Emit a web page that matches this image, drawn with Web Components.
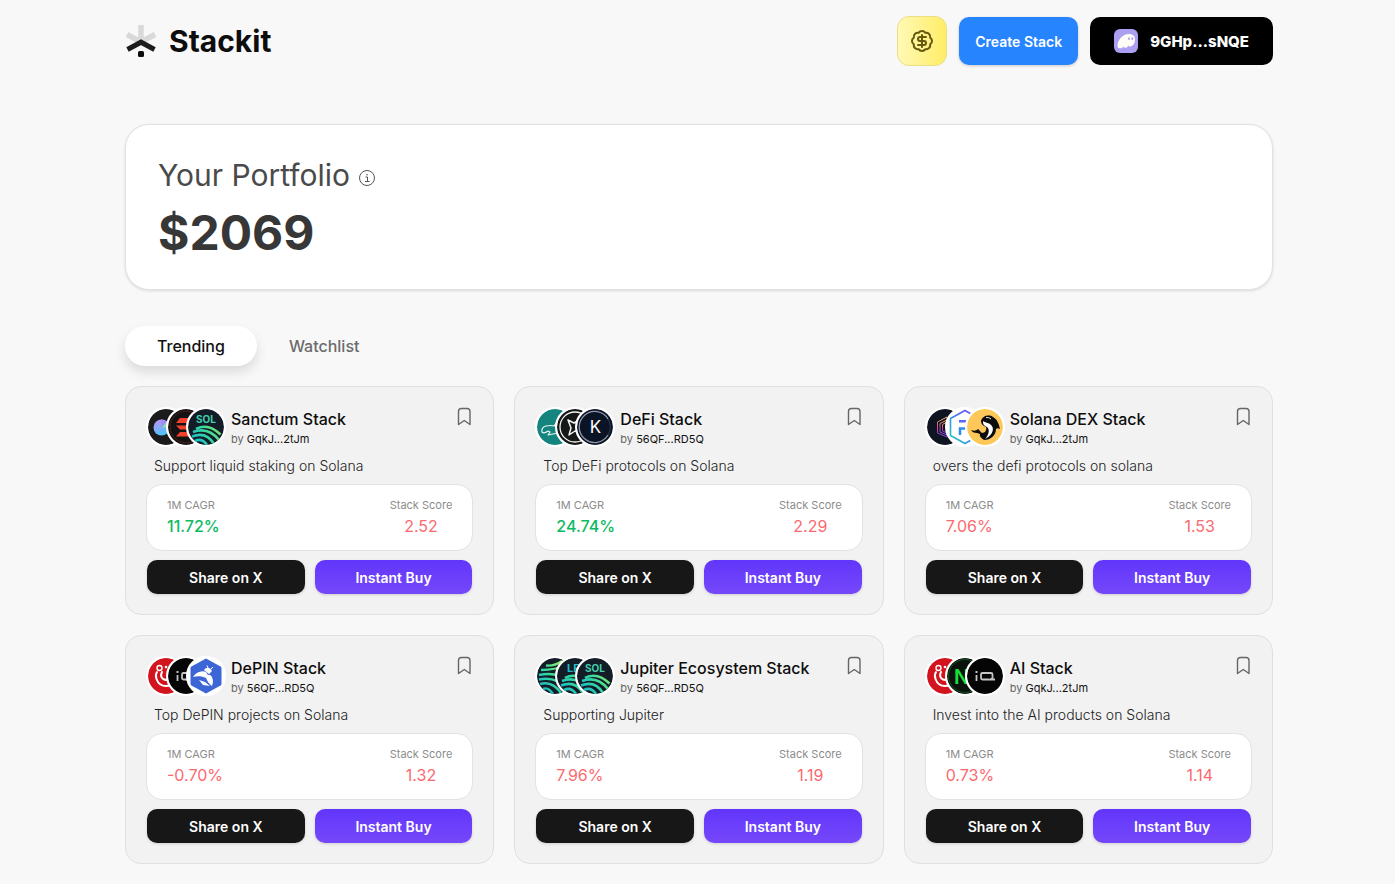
<!DOCTYPE html>
<html lang="en">
<head>
<meta charset="utf-8">
<meta name="viewport" content="width=device-width, initial-scale=1">
<title>Stackit</title>
<style>
  * {
    box-sizing: border-box;
  }

  body {
    margin: 0;
    padding: 16px 122px 18px 125px;
    background: #f8f8f8;
    color: #111;
    font-family: Inter, "Liberation Sans", sans-serif;
  }

  .stacks {
    display: grid;
    grid-template-columns: repeat(3, 1fr);
    gap: 20px;
  }

  @media (max-width: 1100px) {
    body {
      padding: 16px 24px;
    }

    .stacks {
      grid-template-columns: repeat(auto-fill, minmax(320px, 1fr));
    }
  }
</style>
</head>
<body>
  <stack-header wallet="9GHp...sNQE">Stackit</stack-header>

  <main>
    <portfolio-card amount="$2069">Your Portfolio</portfolio-card>

    <stack-tabs active="0">
      <span slot="first">Trending</span>
      <span slot="second">Watchlist</span>
    </stack-tabs>

    <div class="stacks">
      <stack-card name="Sanctum Stack" owner="GqkJ...2tJm" tokens="orb,sanctum,sol" cagr="11.72%" trend="up" score="2.52">Support liquid staking on Solana</stack-card>
      <stack-card name="DeFi Stack" owner="56QF...RD5Q" tokens="drift,spark,kamino" cagr="24.74%" trend="up" score="2.29">Top DeFi protocols on Solana</stack-card>
      <stack-card name="Solana DEX Stack" owner="GqkJ...2tJm" tokens="meteor,flux,orca" cagr="7.06%" trend="down" score="1.53">overs the defi protocols on solana</stack-card>
      <stack-card name="DePIN Stack" owner="56QF...RD5Q" tokens="render,ionet,hive" cagr="-0.70%" trend="down" score="1.32">Top DePIN projects on Solana</stack-card>
      <stack-card name="Jupiter Ecosystem Stack" owner="56QF...RD5Q" tokens="jup,lfg,sol" cagr="7.96%" trend="down" score="1.19">Supporting Jupiter</stack-card>
      <stack-card name="AI Stack" owner="GqkJ...2tJm" tokens="render,nos,ionet" cagr="0.73%" trend="down" score="1.14">Invest into the AI products on Solana</stack-card>
    </div>
  </main>

<script>
  const swoops = `
    <g fill="none" stroke="url(#g)" stroke-width="2.600">
      <path d="M8 20Q20 13.500 32.500 25.500"/>
      <path d="M5 23Q20 17.500 31 31"/>
      <path d="M4 27.500Q18 22 26 35"/>
      <path d="M7 32Q14 28.500 19 36"/>
    </g>`;

  const greenGradient = `
    <linearGradient id="g" x1="0" y1="36" x2="34" y2="8" gradientUnits="userSpaceOnUse">
      <stop offset="0.100" stop-color="#12b5d0"/>
      <stop offset="0.500" stop-color="#35d8a0"/>
      <stop offset="1" stop-color="#b5ee54"/>
    </linearGradient>`;

  // every token is drawn on a 36x36 board, the host clips it to a circle
  const tokens = {
    orb: `
      <defs><linearGradient id="g" x1="0" y1="0" x2="0.300" y2="1">
        <stop offset="0" stop-color="#c58cf5"/><stop offset="1" stop-color="#52c3fa"/>
      </linearGradient></defs>
      <rect width="36" height="36" fill="#1b1b1d"/>
      <circle cx="13.500" cy="18.500" r="8" fill="url(#g)"/>
      <path d="M13.500 18.500L19 12.500A8 8 0 0 1 21.500 18Z" fill="#8fe0a8"/>
      <path d="M13.500 18.500L13 10.500A8 8 0 0 1 19 12.500Z" fill="#a38cf8"/>`,
    sanctum: `
      <rect width="36" height="36" fill="#131313"/>
      <circle cx="18" cy="18" r="16" fill="none" stroke="#6e231a" stroke-width="0.700"/>
      <path d="M12 9H28L24 14H8Z M8 16.500H24L28 20.500H12Z M12 23H28L24 27.500H8Z" fill="#f2402c"/>`,
    sol: `
      <defs>${greenGradient}</defs>
      <rect width="36" height="36" fill="#131d28"/>
      <text x="18" y="14" text-anchor="middle" font-size="10" font-weight="700" fill="#43cfae">SOL</text>
      ${swoops}`,
    lfg: `
      <defs>${greenGradient}</defs>
      <rect width="36" height="36" fill="#131d28"/>
      <text x="10" y="14" font-size="11" font-weight="700" fill="#20bcc8">LF</text>
      ${swoops}`,
    jup: `
      <defs>${greenGradient}</defs>
      <rect width="36" height="36" fill="#131d28"/>
      <g fill="none" stroke="url(#g)" stroke-width="2.400">
        <path d="M9 7.500Q17 8.500 25 3"/>
        <path d="M4 12Q18 12 30 7"/>
        <path d="M2 17Q20 13 33 24"/>
        <path d="M2 21.500Q19 18 31 31"/>
        <path d="M3 26Q15 22.500 24 35"/>
        <path d="M6 31Q11 28.500 16 36"/>
      </g>`,
    drift: `
      <rect width="36" height="36" fill="#14857e"/>
      <path d="M22 11L17 17Q14 16 9 17Q4 18.500 5 23Q7 25 11 22L13 23L11 26L16 25L21 24" fill="none" stroke="#e6f5f2" stroke-width="1.200" stroke-linejoin="round"/>`,
    spark: `
      <rect width="36" height="36" fill="#151817"/>
      <circle cx="18" cy="18" r="15" fill="none" stroke="#f2f4f2" stroke-width="1.300"/>
      <path d="M11 11L17 14L22 11L21 17L24 24L18 22L12 26L14 19Z" fill="none" stroke="#f2f4f2" stroke-width="1.500" stroke-linejoin="round"/>`,
    kamino: `
      <rect width="36" height="36" fill="#0b1424"/>
      <path d="M31 10A15.500 15.500 0 1 0 31 26" fill="none" stroke="#8d98a8" stroke-width="1.300"/>
      <path d="M31 26A15.500 15.500 0 0 0 31 10" fill="none" stroke="#39475c" stroke-width="0.800"/>
      <text x="18.500" y="24" text-anchor="middle" font-size="17" font-weight="400" fill="#fff">K</text>`,
    meteor: `
      <defs><linearGradient id="g" x1="0" y1="0" x2="0" y2="1">
        <stop offset="0" stop-color="#f1b36a"/><stop offset="0.500" stop-color="#d64a95"/><stop offset="1" stop-color="#7b3cf0"/>
      </linearGradient></defs>
      <rect width="36" height="36" fill="#0f1520"/>
      <g fill="none" stroke="url(#g)" stroke-width="1">
        <path d="M10.500 24V13L20 8V28Z"/>
        <path d="M13 23V14.500L20 11V26Z"/>
        <path d="M15.500 22V15.500L20 13V24Z"/>
      </g>`,
    flux: `
      <defs><linearGradient id="g" x1="0" y1="1" x2="1" y2="0">
        <stop offset="0" stop-color="#25d0bd"/><stop offset="0.450" stop-color="#3485f4"/><stop offset="1" stop-color="#8c35f5"/>
      </linearGradient></defs>
      <rect width="36" height="36" fill="#fff"/>
      <path d="M18 1.500L32 9.500V26.500L18 34.500L3.500 26.500V9.500Z" fill="none" stroke="url(#g)" stroke-width="1.600"/>
      <rect x="12" y="11" width="11" height="2.500" fill="#5b63f4"/>
      <path d="M13 26V19.500H21" fill="none" stroke="#2d8cf0" stroke-width="2.500"/>`,
    orca: `
      <rect width="36" height="36" fill="#fdc75a"/>
      <path d="M14 12C15 7 22 5 26 8C30 10 32 15 33 20C31 19 30 19 29 20C29 26 24 31 17 31C14 29 12 27 13 25L10 24C7 24 5 23 4 21C7 22 9 22 11 20C13 21 13 23 15 24C18 24 20 21 19 18C16 17 14 15 14 12Z" fill="#0c0c0c"/>
      <path d="M16 12C19 14 24 14 25.500 18C27 22 24 27 18 30C22 26 23 20 20 18C17 17 15.500 15 16 12Z" fill="#fff"/>
      <path d="M19 8.500Q22 8 24 10" fill="none" stroke="#fff" stroke-width="0.900"/>`,
    render: `
      <rect width="36" height="36" fill="#d3131d"/>
      <path d="M9 14Q7 17 8.500 21Q11 28 18 28Q24 28 27 23M14 14Q12 18 14.500 20.500Q18 23.500 22 20" fill="none" stroke="#fff" stroke-width="2" stroke-linecap="round"/>
      <circle cx="11.500" cy="10" r="2.500" fill="none" stroke="#fff" stroke-width="1.400"/>
      <circle cx="18" cy="9" r="1.300" fill="#fff"/>`,
    ionet: `
      <rect width="36" height="36" fill="#050505"/>
      <g fill="none" stroke="#c4c4c4" stroke-width="1.800">
        <path d="M9.500 17V23M8.500 14H10.500"/>
        <path d="M22 21.500H15.500Q14 21.500 14 20V16.500Q14 15 15.500 15H24Q25.500 15 25.500 16.500V20L23 21.500H28"/>
      </g>`,
    hive: `
      <rect width="36" height="36" fill="#fff"/>
      <path d="M18 0.500L33.500 9V27L18 35.500L2.500 27V9Z" fill="#3c66d6"/>
      <path d="M5 19C8 14 14 12 18 14L20 17C23 16 25 20 25 24L24 28C20 25 19 22 18 20C14 18 9 18 5 19Z" fill="#fff"/>
      <path d="M16 12C18 9 22 9 24 13L21 16ZM11 22L17 24L22 28L15 27Z" fill="#fff"/>
      <path d="M20 10L19 7.500M23 11L25 9" stroke="#fff" stroke-width="1"/>`,
    nos: `
      <rect width="36" height="36" fill="#0a120c"/>
      <circle cx="18" cy="18" r="16.500" fill="none" stroke="#154f22" stroke-width="1"/>
      <text x="7" y="25.500" font-size="20" font-weight="600" fill="#17e03c">N</text>`
  };

  class TokenIcon extends HTMLElement {
    constructor() {
      super();
      this.attachShadow({ mode: 'open' });
    }
    connectedCallback() {
      this.shadowRoot.innerHTML = `
        <style>
          :host {
            display: block;
            box-sizing: border-box;
            width: 40px;
            height: 40px;
            border: 2px solid #fff;
            border-radius: 50%;
            overflow: hidden;
            background: #fff;
          }

          svg {
            display: block;
            border-radius: 50%;
          }
        </style>
        <svg width="36" height="36" viewBox="0 0 36 36" aria-hidden="true">${tokens[this.getAttribute('name')]}</svg>`;
    }
  }

  class StackHeader extends HTMLElement {
    constructor() {
      super();
      this.attachShadow({ mode: 'open' });
    }
    connectedCallback() {
      this.shadowRoot.innerHTML = `
        <style>
          :host {
            display: block;
            margin-bottom: 58px;
          }

          header,
          .brand,
          nav,
          .wallet {
            display: flex;
            align-items: center;
          }

          header {
            justify-content: space-between;
          }

          .brand {
            gap: 12px;
            color: #0d0d0d;
            font-size: 30px;
            line-height: 40px;
            font-weight: 700;
            text-decoration: none;
          }

          nav {
            gap: 12px;
          }

          button {
            box-sizing: border-box;
            height: 48px;
            margin: 0;
            border: 0;
            font-family: inherit;
            cursor: pointer;
          }

          .rewards {
            display: flex;
            align-items: center;
            justify-content: center;
            width: 50px;
            height: 50px;
            padding: 0;
            border: 1px solid #eadf85;
            border-radius: 12px;
            background: linear-gradient(90deg, #fff9b5, #ffed66);
          }

          .create {
            padding: 0 16px;
            border-radius: 10px;
            background: #2684ff;
            box-shadow: 0 1px 3px rgba(0, 0, 0, 0.2);
            color: #fff;
            font-size: 14px;
            font-weight: 600;
          }

          .wallet {
            gap: 12px;
            padding: 0 24px;
            border-radius: 10px;
            background: #000;
            color: #fff;
            font-size: 15px;
            font-weight: 800;
          }
        </style>
        <header>
          <a class="brand" href="#">
            <svg width="32" height="32" viewBox="0 0 32 32" aria-hidden="true">
              <path d="M16 0V17M2 9.500L16 17L30 9.500" fill="none" stroke="#d9d9d9" stroke-width="5.500"/>
              <path d="M2.500 24.500L16 17.200L29.500 24.500" fill="none" stroke="#1c1c1c" stroke-width="5"/>
              <rect x="13" y="26" width="6" height="6" rx="1.500" fill="#0d0d0d"/>
            </svg>
            <slot></slot>
          </a>
          <nav>
            <button class="rewards" type="button" aria-label="Rewards">
              <svg width="24" height="24" viewBox="0 0 24 24" fill="none" stroke="#66590f" stroke-width="2" stroke-linecap="round" stroke-linejoin="round">
                <path d="M3.850 8.620a4 4 0 0 1 4.780-4.770 4 4 0 0 1 6.740 0 4 4 0 0 1 4.780 4.780 4 4 0 0 1 0 6.740 4 4 0 0 1-4.770 4.780 4 4 0 0 1-6.750 0 4 4 0 0 1-4.780-4.770 4 4 0 0 1 0-6.760Z"/>
                <path d="M16 8h-6a2 2 0 1 0 0 4h4a2 2 0 1 1 0 4H8M12 18V6"/>
              </svg>
            </button>
            <button class="create" type="button">Create Stack</button>
            <button class="wallet" type="button">
              <svg width="24" height="24" viewBox="0 0 24 24" aria-hidden="true">
                <rect width="24" height="24" rx="6" fill="#ab9ff2"/>
                <path d="M3.500 16.500C3.500 11 8.500 5 15 5C19 5 21 7.300 21 10.500C21 15 18 17.500 16 17.500C15 17.500 14.500 17 14.500 16.500C13.500 18 12.500 18.800 11.300 18.800C10.300 18.800 9.800 18.200 9.700 17.400C8.500 18.700 7 19.500 5.500 19.300C4 19.100 3.500 18 3.500 16.500Z" fill="#fffdf8"/>
                <ellipse cx="15" cy="9.700" rx="0.900" ry="1.400" fill="#ab9ff2"/>
                <ellipse cx="18.300" cy="9.700" rx="0.900" ry="1.400" fill="#ab9ff2"/>
              </svg>
              <span>${this.getAttribute('wallet')}</span>
            </button>
          </nav>
        </header>`;
    }
  }

  class PortfolioCard extends HTMLElement {
    constructor() {
      super();
      this.attachShadow({ mode: 'open' });
    }
    connectedCallback() {
      this.shadowRoot.innerHTML = `
        <style>
          :host {
            display: block;
            padding: 32px 32px 24px;
            margin-bottom: 36px;
            border: 1px solid #e2e2e5;
            border-radius: 24px;
            background: #fff;
            box-shadow: 0 1px 3px rgba(0, 0, 0, 0.12);
          }

          h2 {
            margin: 0;
            color: #4a4a4a;
            font-size: 30px;
            line-height: 36px;
            font-weight: 400;
          }

          svg {
            margin-left: 9px;
            vertical-align: middle;
          }

          p {
            margin: 8px 0 0;
            color: #373737;
            font-size: 48px;
            line-height: 64px;
            font-weight: 700;
          }
        </style>
        <h2><slot></slot><svg width="16" height="16" viewBox="0 0 16 16" fill="none" stroke="#555" role="img" aria-label="Info">
          <circle cx="8" cy="8" r="7.500"/>
          <path d="M6.500 7H8.500V11.500M6 11.500H10.500"/>
          <circle cx="8" cy="4.700" r="0.800" fill="#555" stroke="none"/>
        </svg></h2>
        <p>${this.getAttribute('amount')}</p>`;
    }
  }

  class StackTabs extends HTMLElement {
    constructor() {
      super();
      this.attachShadow({ mode: 'open' });
      this.shadowRoot.innerHTML = `
        <style>
          :host {
            display: block;
            margin-bottom: 20px;
          }

          div {
            display: flex;
          }

          button {
            height: 40px;
            margin: 0;
            padding: 0 32px;
            border: 0;
            border-radius: 20px;
            background: none;
            color: #6b6b6b;
            font-family: inherit;
            font-size: 16px;
            font-weight: 500;
            cursor: pointer;
          }

          button[aria-selected='true'] {
            background: #fff;
            box-shadow: 0 6px 12px rgba(0, 0, 0, 0.12);
            color: #111;
          }
        </style>
        <div role="tablist">
          <button type="button" role="tab"><slot name="first"></slot></button>
          <button type="button" role="tab"><slot name="second"></slot></button>
        </div>`;
      this.tabs = this.shadowRoot.querySelectorAll('button');
      this.tabs.forEach((tab, i) => tab.addEventListener('click', () => this.select(i)));
    }
    connectedCallback() {
      this.select(Number(this.getAttribute('active')));
    }
    select(index) {
      this.tabs.forEach((tab, i) => tab.setAttribute('aria-selected', i === index));
    }
  }

  class StackCard extends HTMLElement {
    constructor() {
      super();
      this.attachShadow({ mode: 'open' });
    }
    connectedCallback() {
      const icons = this.getAttribute('tokens')
        .split(',')
        .map((name) => `<token-icon name="${name}"></token-icon>`)
        .join('');

      this.shadowRoot.innerHTML = `
        <style>
          :host {
            display: block;
            padding: 20px;
            border: 1px solid #e0e0e0;
            border-radius: 16px;
            background: #f2f2f2;
          }

          .top {
            display: flex;
            gap: 5px;
          }

          .tokens {
            display: flex;
            flex-shrink: 0;
          }

          token-icon + token-icon {
            margin-left: -20px;
          }

          .names {
            flex: 1;
            min-width: 0;
          }

          h3 {
            margin: 0;
            color: #0d0d0d;
            font-size: 16px;
            line-height: 24px;
            font-weight: 500;
          }

          .owner {
            margin: 0;
            color: #666;
            font-size: 11px;
            line-height: 16px;
          }

          .owner span {
            color: #111;
          }

          .bookmark {
            display: flex;
            align-items: flex-start;
            height: 20px;
            margin: 0;
            padding: 0;
            border: 0;
            background: none;
            cursor: pointer;
          }

          .text {
            margin: 8px 0 7px;
            padding: 0 8px;
            color: #222;
            font-size: 14px;
            line-height: 22px;
            font-weight: 300;
          }

          .stats {
            display: flex;
            justify-content: space-between;
            margin: 0 0 9px;
            padding: 11px 20px 12px;
            border: 1px solid #e2e2e2;
            border-radius: 16px;
            background: #fff;
          }

          dt {
            color: #8c8c8c;
            font-size: 11px;
            line-height: 18px;
          }

          dd {
            margin: 0;
            color: #fb6a70;
            font-size: 16px;
            line-height: 24px;
          }

          .score {
            text-align: center;
          }

          .up {
            color: #0cba62;
            font-weight: 500;
          }

          .actions {
            display: flex;
            gap: 10px;
            padding: 0 1px;
          }

          .actions button {
            flex: 1;
            height: 34px;
            margin: 0;
            padding: 0;
            border: 0;
            border-radius: 10px;
            background: #171717;
            box-shadow: 0 1px 3px rgba(0, 0, 0, 0.15);
            color: #fff;
            font-family: inherit;
            font-size: 14px;
            font-weight: 600;
            cursor: pointer;
          }

          .actions .buy {
            background: linear-gradient(#6236fb, #7548fa);
          }
        </style>
        <div class="top">
          <div class="tokens">${icons}</div>
          <div class="names">
            <h3>${this.getAttribute('name')}</h3>
            <p class="owner">by <span>${this.getAttribute('owner')}</span></p>
          </div>
          <button class="bookmark" type="button" aria-label="Add to watchlist">
            <svg width="16" height="20" viewBox="0 0 16 20" fill="none" stroke="#666" stroke-width="1.400" stroke-linejoin="round">
              <path d="M1.500 17.500V4.500Q1.500 1.500 4.500 1.500H10Q13 1.500 13 4.500V17.500L7.250 13.500Z"/>
            </svg>
          </button>
        </div>
        <p class="text"><slot></slot></p>
        <dl class="stats">
          <div>
            <dt>1M CAGR</dt>
            <dd class="${this.getAttribute('trend')}">${this.getAttribute('cagr')}</dd>
          </div>
          <div class="score">
            <dt>Stack Score</dt>
            <dd>${this.getAttribute('score')}</dd>
          </div>
        </dl>
        <div class="actions">
          <button type="button">Share on X</button>
          <button class="buy" type="button">Instant Buy</button>
        </div>`;
    }
  }

  window.customElements.define('token-icon', TokenIcon);
  window.customElements.define('stack-header', StackHeader);
  window.customElements.define('portfolio-card', PortfolioCard);
  window.customElements.define('stack-tabs', StackTabs);
  window.customElements.define('stack-card', StackCard);
</script>
</body>
</html>
